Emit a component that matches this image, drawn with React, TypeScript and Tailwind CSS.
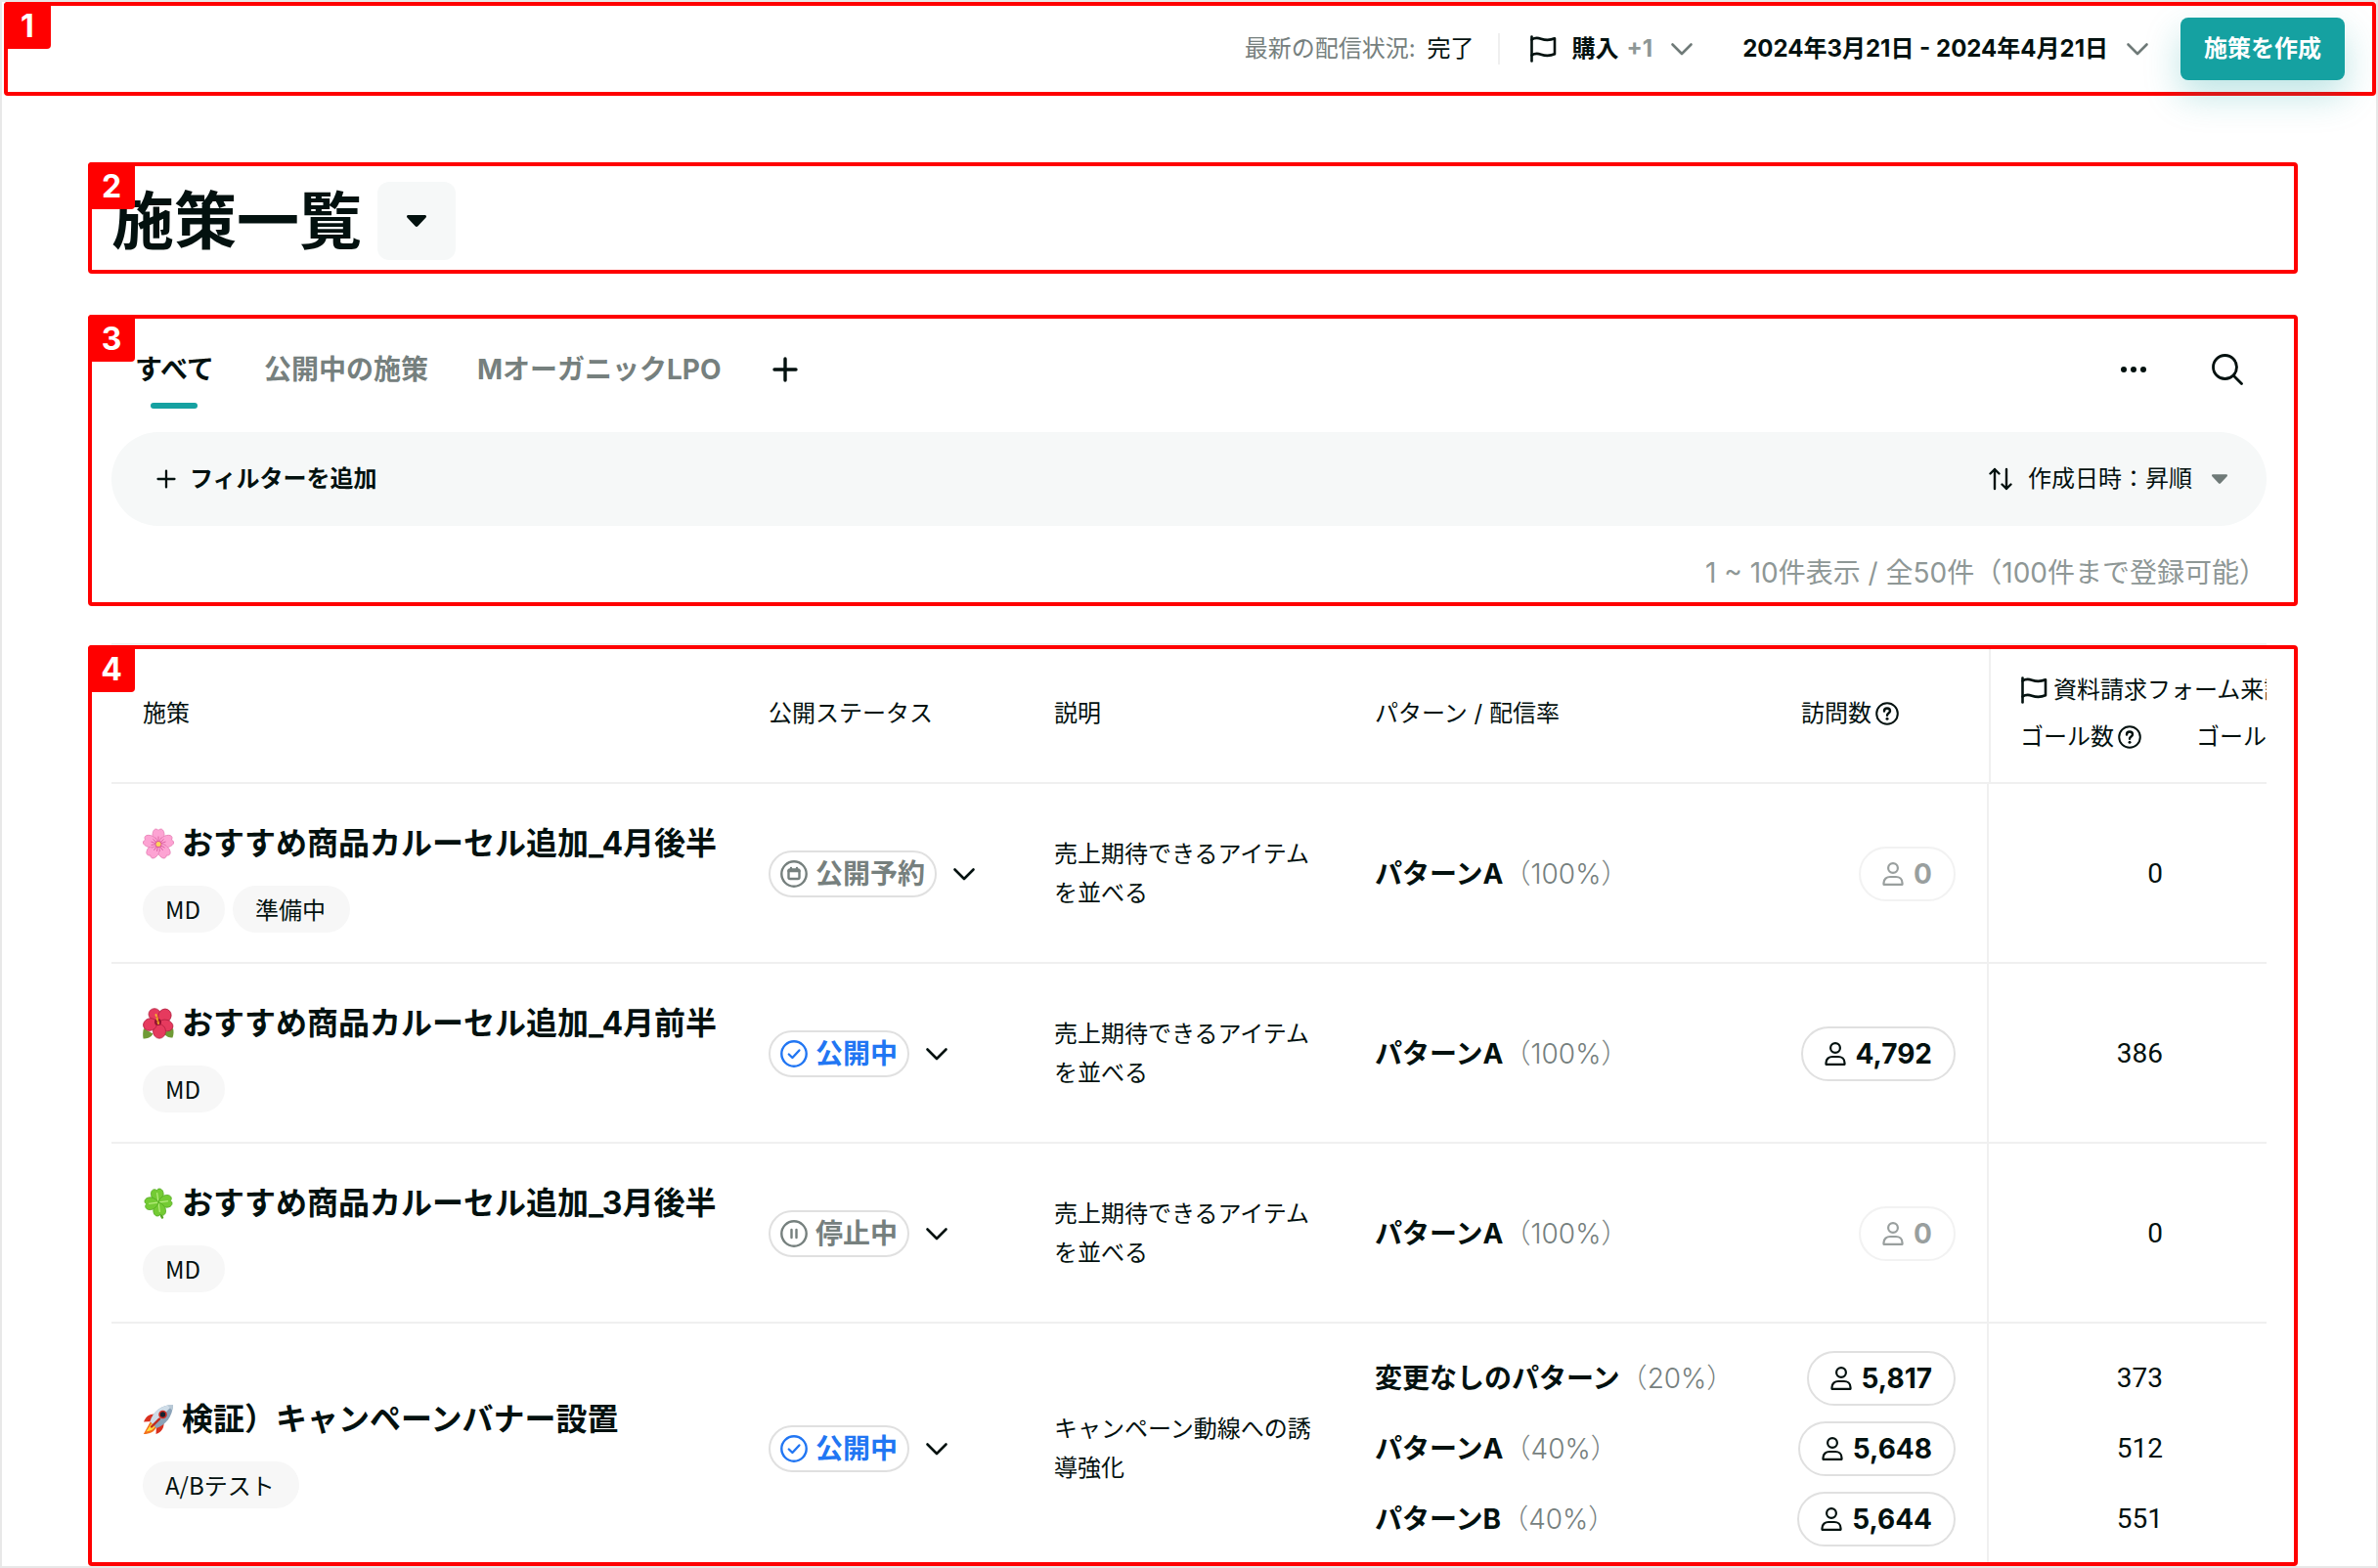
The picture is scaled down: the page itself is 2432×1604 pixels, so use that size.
import React from 'react';
import clsx from 'clsx';

type Status = 'reserved' | 'published' | 'stopped';

type Pattern = { name: string; rate: string; visits: string; goals: string };

type Campaign = {
  id: number;
  icon: React.ReactNode;
  title: string;
  tags: string[];
  status: Status;
  description: string;
  patterns: Pattern[];
};

const ChevronDown = ({ className }: { className?: string }) => (
  <svg className={className} viewBox="0 0 24 24" fill="none" stroke="currentColor" strokeWidth="2.6" strokeLinecap="round" strokeLinejoin="round">
    <path d="M2.5 7.5 12 17l9.5-9.5" />
  </svg>
);

const Caret = ({ className }: { className?: string }) => (
  <svg className={className} viewBox="0 0 20 12" fill="currentColor">
    <path d="M1.5 0h17c1.3 0 2 1.5 1.1 2.5l-8.2 8.8c-.8.9-2 .9-2.8 0L.4 2.5C-.5 1.5.2 0 1.5 0z" />
  </svg>
);

const FlagIcon = () => (
  <svg className="w-7 h-7 shrink-0" viewBox="0 0 28 28" fill="none" stroke="currentColor" strokeWidth="2.6" strokeLinecap="round" strokeLinejoin="round">
    <path d="M2.5 1.5v25" />
    <path d="M2.5 4.5c3-2 6-2 9.500-.8 4.500 1.600 8.500 2 14-.4v16c-5.500 2.400-9.500 2-14 .4-3.500-1.200-6.500-1.200-9.500.8" />
  </svg>
);

const PlusIcon = ({ className, strokeWidth }: { className?: string; strokeWidth: number }) => (
  <svg className={className} viewBox="0 0 26 26" fill="none" stroke="currentColor" strokeWidth={strokeWidth} strokeLinecap="round">
    <path d="M13 2v22M2 13h22" />
  </svg>
);

const HelpIcon = () => (
  <svg className="w-6 h-6 shrink-0" viewBox="0 0 24 24" fill="none" stroke="currentColor" strokeWidth="2" strokeLinecap="round" strokeLinejoin="round">
    <circle cx="12" cy="12" r="10.8" />
    <path d="M9 9.500c0-1.800 1.300-3 3-3s3 1.200 3 2.800c0 2.200-3 2.300-3 4.500" strokeWidth="2.400" />
    <circle cx="12" cy="17.3" r="1.5" fill="currentColor" stroke="none" />
  </svg>
);

const PersonIcon = () => (
  <svg className="w-[22px] h-6" viewBox="0 0 22 24" fill="none" stroke="currentColor" strokeWidth="2.2" strokeLinejoin="round">
    <circle cx="11" cy="6" r="4.9" />
    <path d="M1.500 22.800v-1.500c0-4 3-6.300 6.500-6.300h6c3.500 0 6.500 2.300 6.500 6.300v1.500z" />
  </svg>
);

const SakuraIcon = () => (
  <svg className="w-8 h-8 shrink-0" viewBox="0 0 32 32">
    {[0, 72, 144, 216, 288].map((deg) => (
      <g key={deg} transform={`rotate(${deg} 16 16.5)`}>
        <path d="M16 17C10 13 8.500 6 11.500 2c1.100-1.400 3.200-1.200 4.500.4 1.300-1.600 3.400-1.800 4.500-.4 3 4 1.500 11-4.500 15z" fill="#fda3d3" stroke="#e681b5" strokeWidth=".8" />
        <path d="M16 15V9M15 14l-2-4M17 14l2-4" stroke="#d8569a" strokeWidth=".8" strokeLinecap="round" />
      </g>
    ))}
    <circle cx="16" cy="16.5" r="3.4" fill="#d9569a" />
    <circle cx="16" cy="16.5" r="2.5" fill="#fbd35a" />
  </svg>
);

const HibiscusIcon = () => (
  <svg className="w-8 h-8 shrink-0" viewBox="0 0 32 32">
    <path d="M1 21c-1 3-1 7-.5 10.500 4 0 8-1 10-5zM31 21c.8 3 .8 6-.5 9.500-4 0-7-1-9-5z" fill="#6f9a35" />
    <g fill="#e63a5e" stroke="#b31f40" strokeWidth=".8">
      <ellipse cx="12" cy="6.5" rx="6" ry="5.8" />
      <ellipse cx="22.500" cy="8" rx="6.500" ry="7" transform="rotate(25 22.500 8)" />
      <ellipse cx="23.500" cy="18" rx="7.500" ry="5.800" transform="rotate(15 23.500 18)" />
      <ellipse cx="17" cy="24" rx="6.500" ry="7.200" />
      <ellipse cx="7.500" cy="17" rx="7" ry="6.200" transform="rotate(-20 7.500 17)" />
    </g>
    <circle cx="15.500" cy="14.500" r="3.500" fill="#941232" />
    <path d="m16 16-2.500-9" stroke="#f5b52e" strokeWidth="2" strokeLinecap="round" strokeDasharray="1.500 2.500" />
    <path d="m16 16-1-7" stroke="#e08a1e" strokeWidth="1.200" strokeLinecap="round" />
  </svg>
);

const CloverIcon = () => (
  <svg className="w-8 h-8 shrink-0" viewBox="0 0 32 32">
    <path d="M16 16c1 6 1 10 4 14.500" fill="none" stroke="#5aa826" strokeWidth="2.4" strokeLinecap="round" />
    {[-8, 82, 172, 262].map((deg) => (
      <g key={deg} transform={`rotate(${deg} 16 15)`}>
        <path d="M16 15.500C10.500 12 8.500 7.500 10.200 3.500c1.300-2.800 4.600-3 5.800-.8 1.200-2.200 4.500-2 5.800.8 1.700 4-.3 8.500-5.800 12z" fill="#74cb34" stroke="#4fa51f" strokeWidth=".7" />
        <path d="M16 14V5" stroke="#b7ec7e" strokeWidth="1.2" />
      </g>
    ))}
  </svg>
);

const RocketIcon = () => (
  <svg className="w-8 h-8 shrink-0" viewBox="0 0 32 32">
    <path d="M8 18 .8 31C7 31 12 29 14.500 23z" fill="#f3701b" />
    <path d="M9 20 3.500 28.500C8 28 11.500 26 13 22.500z" fill="#ffdf3f" />
    <path d="M13 10.500c-6-.5-10 2.500-12 8l8.500-.5zM21.500 19c.5 6-2.500 10-8 12l.5-8.500z" fill="#d9301f" />
    <path d="M7.500 18C10.500 8 19 1 31 1c-.5 12-7.500 20.500-17 24z" fill="#8ba3b8" />
    <path d="M7.500 18C10.500 8 19 1 31 1L11 21.500z" fill="#cfdde8" />
    <path d="M25.500 1.800C27.300 1.300 29 1 31 1c-.1 2-.4 4-.9 5.800z" fill="#b9c9d6" />
    <circle cx="20.500" cy="11" r="4.300" fill="#cf2c22" />
    <circle cx="20.500" cy="11" r="2.700" fill="#16222f" />
    <path d="m17 15.500-8 8" stroke="#c2281c" strokeWidth="2.4" strokeLinecap="round" />
  </svg>
);

const campaigns: Campaign[] = [
  {
    id: 1,
    icon: <SakuraIcon />,
    title: 'おすすめ商品カルーセル追加_4月後半',
    tags: ['MD', '準備中'],
    status: 'reserved',
    description: '売上期待できるアイテムを並べる',
    patterns: [{ name: 'パターンA', rate: '100%', visits: '0', goals: '0' }],
  },
  {
    id: 2,
    icon: <HibiscusIcon />,
    title: 'おすすめ商品カルーセル追加_4月前半',
    tags: ['MD'],
    status: 'published',
    description: '売上期待できるアイテムを並べる',
    patterns: [{ name: 'パターンA', rate: '100%', visits: '4,792', goals: '386' }],
  },
  {
    id: 3,
    icon: <CloverIcon />,
    title: 'おすすめ商品カルーセル追加_3月後半',
    tags: ['MD'],
    status: 'stopped',
    description: '売上期待できるアイテムを並べる',
    patterns: [{ name: 'パターンA', rate: '100%', visits: '0', goals: '0' }],
  },
  {
    id: 4,
    icon: <RocketIcon />,
    title: '検証）キャンペーンバナー設置',
    tags: ['A/Bテスト'],
    status: 'published',
    description: 'キャンペーン動線への誘導強化',
    patterns: [
      { name: '変更なしのパターン', rate: '20%', visits: '5,817', goals: '373' },
      { name: 'パターンA', rate: '40%', visits: '5,648', goals: '512' },
      { name: 'パターンB', rate: '40%', visits: '5,644', goals: '551' },
    ],
  },
];

const statusLabels: Record<Status, string> = {
  reserved: '公開予約',
  published: '公開中',
  stopped: '停止中',
};

const StatusIcon = ({ status }: { status: Status }) => (
  <svg className="w-7 h-7" viewBox="0 0 28 28" fill="none" stroke="currentColor" strokeWidth="2.4" strokeLinecap="round" strokeLinejoin="round">
    <circle cx="14" cy="14" r="12.7" />
    {status === 'published' && <path d="m8.800 14.500 3.600 3.500 7-7.500" />}
    {status === 'stopped' && <path d="M11.500 10v8M16.500 10v8" />}
    {status === 'reserved' && (
      <>
        <rect x="8.5" y="9.5" width="11" height="9.5" rx="1.5" />
        <path d="M8.500 11h11M11 8v2M17 8v2" />
      </>
    )}
  </svg>
);

// Numbered red marker at the corner of each area
const AreaNumber = ({ n }: { n: number }) => (
  <span className="absolute -top-1 -left-1 z-10 w-12 h-12 pt-0.5 flex items-center justify-center rounded bg-[#ff0000] text-white text-[32px] leading-none font-bold">
    {n}
  </span>
);

const TopBar = () => (
  <header className="relative ml-0.5 h-24 flex items-center justify-end border-4 border-[#ff0000] rounded pr-7 text-2xl">
    <AreaNumber n={1} />
    <span className="text-[#76807e]">最新の配信状況:</span>
    <span className="ml-3">完了</span>
    <div className="ml-6 w-0.5 h-8 bg-[#efefef]"></div>
    <button className="ml-[30px] flex items-center">
      <FlagIcon />
      <span className="ml-4 font-bold">購入</span>
      <span className="ml-2 font-bold text-[#8e9796]">+1</span>
      <ChevronDown className="ml-[18px] w-6 h-6 text-[#6f7a78]" />
    </button>
    <button className="ml-[50px] flex items-center font-bold">
      2024年3月21日 - 2024年4月21日
      <ChevronDown className="ml-[18px] w-6 h-6 text-[#6f7a78]" />
    </button>
    <button className="ml-8 w-[168px] h-16 rounded-lg bg-[#15a1a1] text-white font-bold shadow-[0_16px_36px_rgba(21,161,161,0.28)]">
      施策を作成
    </button>
  </header>
);

const Toolbar = () => (
  <section className="relative mt-[42px] border-4 border-[#ff0000] rounded pl-5 pr-7">
    <AreaNumber n={3} />
    <nav className="flex h-[92px] pt-3 px-6 items-stretch text-[28px] font-bold">
      <button className="relative">
        すべて
        <span className="absolute bottom-0 left-1/2 -translate-x-1/2 w-12 h-1.5 rounded-full bg-[#15a1a1]"></span>
      </button>
      <button className="ml-[51px] text-[#76807e]">公開中の施策</button>
      <button className="ml-[50px] text-[#76807e]">MオーガニックLPO</button>
      <button className="ml-[52px]" aria-label="タブを追加">
        <PlusIcon className="w-[26px] h-[26px]" strokeWidth={3.4} />
      </button>
      <button className="ml-auto" aria-label="メニュー">
        <svg className="w-[26px] h-[26px]" viewBox="0 0 26 26" fill="currentColor">
          <circle cx="3" cy="13" r="3" />
          <circle cx="13" cy="13" r="3" />
          <circle cx="23" cy="13" r="3" />
        </svg>
      </button>
      <button className="ml-[67px]" aria-label="検索">
        <svg className="w-8 h-8" viewBox="0 0 32 32" fill="none" stroke="currentColor" strokeWidth="2.8" strokeLinecap="round">
          <circle cx="13.5" cy="13.5" r="12" />
          <path d="m22.500 22.500 8 8" />
        </svg>
      </button>
    </nav>
    <div className="mt-6 h-24 rounded-full bg-[#f6f8f8] pl-[46px] pr-10 flex items-center justify-between text-2xl">
      <button className="flex items-center gap-[14px] font-bold">
        <PlusIcon className="w-5 h-5" strokeWidth={3} />
        フィルターを追加
      </button>
      <button className="flex items-center">
        <svg className="w-6 h-6" viewBox="0 0 24 24" fill="none" stroke="currentColor" strokeWidth="2.4" strokeLinecap="round" strokeLinejoin="round">
          <path d="M6 22V2M1.500 6.500 6 2l4.500 4.500M18 2v20M13.500 17.500 18 22l4.500-4.500" />
        </svg>
        <span className="ml-4">作成日時：昇順</span>
        <Caret className="ml-5 w-4 h-[10px] text-[#6f7a78]" />
      </button>
    </div>
    <p className="pt-[18px] text-right text-[28px] leading-[60px] text-[#8e9796]">
      1 ~ 10件表示 / 全50件（100件まで登録可能）
    </p>
  </section>
);

const CampaignRow = ({ campaign, last }: { campaign: Campaign; last: boolean }) => {
  const row = last ? 'pb-4' : 'h-[184px] border-b-2 border-[#f0f0f0]';
  const cell = clsx(row, last ? 'pt-7' : 'pt-0.5');

  return (
    <tr>
      <td className={clsx(row, last && 'pt-7', 'pl-8')}>
        <a href="#" className="flex items-center gap-2 text-[32px] leading-[62px] font-bold whitespace-nowrap">
          {campaign.icon}
          {campaign.title}
        </a>
        <div className="mt-3 flex gap-2">
          {campaign.tags.map((tag) => (
            <span key={tag} className="h-12 pl-[23px] pr-[25px] flex items-center rounded-full bg-[#f7f7f7] text-2xl font-['Noto_Sans_CJK_JP',sans-serif]">
              {tag}
            </span>
          ))}
        </div>
      </td>
      <td className={clsx(cell, 'pl-8')}>
        <button className="flex items-center">
          <span
            className={clsx(
              'h-12 px-[10px] flex items-center gap-2 rounded-full border-2 border-[#e0e0e0] text-[28px] font-bold',
              campaign.status === 'published' ? 'text-[#2176f3]' : 'text-[#76807e]'
            )}
          >
            <StatusIcon status={campaign.status} />
            {statusLabels[campaign.status]}
          </span>
          <ChevronDown className="ml-4 w-6 h-6" />
        </button>
      </td>
      <td className={clsx(cell, 'px-8 text-2xl leading-10')}>{campaign.description}</td>
      <td className={clsx(cell, 'pl-8')}>
        <div className="flex flex-col gap-4 text-[28px] leading-[56px] whitespace-nowrap">
          {campaign.patterns.map((p) => (
            <div key={p.name}>
              <span className="font-bold">{p.name}</span>
              <span className="font-light text-[#76807e]">（{p.rate}）</span>
            </div>
          ))}
        </div>
      </td>
      <td className={clsx(cell, 'pr-8 border-r-2 border-r-[#f0f0f0]')}>
        <div className="flex flex-col items-end gap-4">
          {campaign.patterns.map((p) => (
            <button
              key={p.name}
              className={clsx(
                'h-14 px-[22px] flex items-center gap-[10px] rounded-full border-2 border-[#e0e0e0] text-[28px] font-bold',
                p.visits === '0' && 'opacity-40'
              )}
            >
              <PersonIcon />
              {p.visits}
            </button>
          ))}
        </div>
      </td>
      <td className={clsx(cell, 'pr-8')}>
        <div className="flex flex-col gap-4 text-right text-[28px] leading-[56px] font-['Roboto',sans-serif]">
          {campaign.patterns.map((p) => (
            <span key={p.name}>{p.goals}</span>
          ))}
        </div>
      </td>
      <td className={cell}></td>
    </tr>
  );
};

const CampaignTable = () => {
  const head = 'pb-1 h-[138px] border-b-2 border-[#f0f0f0] font-normal';

  return (
    <section className="relative border-4 border-[#ff0000] rounded pl-5 pr-7">
      <AreaNumber n={4} />
      <div className="overflow-hidden">
        <table className="w-full table-fixed border-separate border-spacing-0 text-left">
          <colgroup>
            <col className="w-[640px]" />
            <col className="w-[292px]" />
            <col className="w-[328px]" />
            <col className="w-[436px]" />
            <col className="w-[224px]" />
            <col className="w-[210px]" />
            <col />
          </colgroup>
          <thead className="text-2xl">
            <tr>
              <th className={clsx(head, 'pl-8')}>施策</th>
              <th className={clsx(head, 'pl-8')}>公開ステータス</th>
              <th className={clsx(head, 'pl-8')}>説明</th>
              <th className={clsx(head, 'pl-8')}>パターン / 配信率</th>
              <th className={clsx(head, 'pl-8')}>
                <span className="flex items-center gap-1">
                  訪問数
                  <HelpIcon />
                </span>
              </th>
              <th colSpan={2} className={clsx(head, 'pl-[30px] border-l-2 border-l-[#f0f0f0] leading-[48px] whitespace-nowrap')}>
                <div className="flex items-center gap-1.5">
                  <FlagIcon />
                  資料請求フォーム来訪
                </div>
                <div className="flex items-center">
                  <span className="flex items-center gap-1">
                    ゴール数
                    <HelpIcon />
                  </span>
                  <span className="ml-14">ゴール率</span>
                </div>
              </th>
            </tr>
          </thead>
          <tbody>
            {campaigns.map((campaign, i) => (
              <CampaignRow key={campaign.id} campaign={campaign} last={i === campaigns.length - 1} />
            ))}
          </tbody>
        </table>
      </div>
    </section>
  );
};

const App = () => {
  return (
    <div
      lang="ja"
      className="border-2 border-[#e8e8e8] bg-white text-[#03110f] font-['Inter','Noto_Sans_CJK_JP',sans-serif]"
    >
      <TopBar />
      <main className="pl-[88px] pr-20">
        <section className="relative mt-[68px] border-4 border-[#ff0000] rounded pt-4 pb-[10px] pl-5 flex items-center gap-4">
          <AreaNumber n={2} />
          <h1 className="text-[64px] leading-[80px] font-bold">施策一覧</h1>
          <button className="w-20 h-20 flex items-center justify-center rounded-xl bg-[#f6f8f8]" aria-label="一覧を切り替え">
            <Caret className="w-5 h-3" />
          </button>
        </section>
        <Toolbar />
        <div className="mt-[38px] ml-6 mr-8 h-0.5 bg-[#f0f0f0]"></div>
        <CampaignTable />
      </main>
    </div>
  );
};

export default App;
